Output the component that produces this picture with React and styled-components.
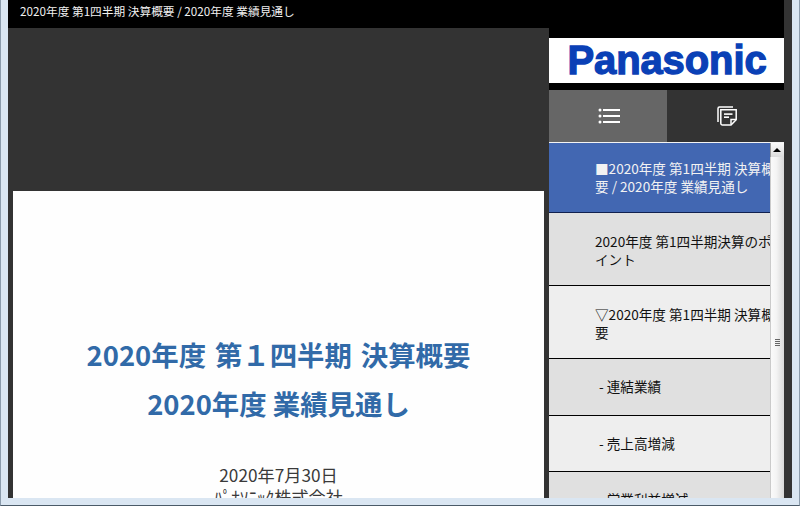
import React from "react";
import styled, { createGlobalStyle } from "styled-components";

const Global = createGlobalStyle`
  html, body { margin: 0; padding: 0; background: #dae6f2; }
  #root { width: 800px; height: 506px; overflow: hidden; }
`;

const Frame = styled.div`
  box-sizing: border-box;
  width: 800px;
  height: 506px;
  padding: 0 7px 7px;
  background: #dae6f2;
  display: flex;
  border-left: 1px solid #8b9bab;
  border-right: 1px solid #8b9bab;
  border-bottom: 1px solid #4a5a68;
  font-family: "Noto Sans CJK JP", "Liberation Sans", sans-serif;
`;

const LeftPane = styled.section`
  width: 541px;
  display: flex;
  flex-direction: column;
  background: #333;
`;

const TitleBar = styled.header`
  height: 28px;
  flex: none;
  background: #000;
  color: #f0f0f0;
  font-size: 11.7px;
  line-height: 21px;
  padding-left: 12px;
  white-space: nowrap;
`;

const Stage = styled.div`
  flex: 1;
  min-height: 0;
  padding: 163px 5px 0 5px;
  display: flex;
`;

const Slide = styled.article`
  flex: 1;
  background: #fefefe;
  overflow: hidden;
  text-align: center;
  padding-top: 139px;
`;

const SlideTitle = styled.h1`
  margin: 0;
  font-size: 27.4px;
  line-height: 49px;
  font-weight: 700;
  color: #316aa8;
  white-space: nowrap;
  word-spacing: ${(p) => p.$spread || 0}px;
`;

const SlideMeta = styled.p`
  margin: 0;
  font-size: 17.2px;
  line-height: 22px;
  color: #3a3a3a;
  white-space: nowrap;
  &:first-of-type { margin-top: 36px; }
`;

const RightPane = styled.aside`
  width: 243px;
  display: flex;
  flex-direction: column;
  background: #333;
`;

const LogoHeader = styled.div`
  width: 235px;
  flex: none;
  background: #000;
  padding: 38px 0 7px;
`;

const LogoBox = styled.div`
  height: 45px;
  background: #fff;
  display: flex;
  align-items: center;
  justify-content: center;
  overflow: hidden;
`;

const Logo = styled.span`
  font-family: "Liberation Sans", Arial, sans-serif;
  font-weight: 700;
  font-size: 40px;
  line-height: 45px;
  letter-spacing: -0.1px;
  color: #0a40b6;
  -webkit-text-stroke: 1.3px #0a40b6;
  margin-left: 1px;
`;

const Tabs = styled.nav`
  display: flex;
  height: 52px;
  flex: none;
`;

const Tab = styled.div`
  width: ${(p) => p.$w}px;
  background: ${(p) => (p.$active ? "#666" : "#333")};
  display: flex;
  align-items: center;
  padding-left: ${(p) => p.$pad}px;
  box-sizing: border-box;
  color: #fff;
`;

const ListArea = styled.div`
  flex: 1;
  min-height: 0;
  width: 235px;
  display: flex;
  border-top: 1px solid #f4f4f4;
`;

const Rows = styled.ul`
  list-style: none;
  margin: 0;
  padding: 0;
  width: 221px;
  overflow: hidden;
`;

const Row = styled.li`
  box-sizing: border-box;
  height: ${(p) => p.$h}px;
  padding: ${(p) => p.$top}px 0 0 ${(p) => (p.$sub ? 50 : 46)}px;
  border-bottom: 1px solid ${(p) => (p.$selected ? "#10204f" : "#000")};
  background: ${(p) => (p.$selected ? "#4267b2" : p.$odd ? "#e0e0e0" : "#eeeeee")};
  color: ${(p) => (p.$selected ? "#f2f2f2" : "#111")};
  font-size: 13.6px;
  line-height: 18px;
  white-space: nowrap;
`;

const Scrollbar = styled.div`
  width: 14px;
  display: flex;
  flex-direction: column;
  background: #fff;
  box-shadow: inset 1px 0 0 #9a9a9a;
`;

const ScrollButton = styled.div`
  height: 14px;
  flex: none;
  display: flex;
  align-items: center;
  justify-content: center;
  background: linear-gradient(#fafafa, #dcdcdc);
  box-shadow: inset 1px 0 0 #9a9a9a;
  &::before {
    content: "";
    border-left: 4px solid transparent;
    border-right: 4px solid transparent;
    border-bottom: 4px solid #000;
  }
`;

const ScrollThumb = styled.div`
  flex: 1;
  display: flex;
  flex-direction: column;
  align-items: center;
  gap: 1px;
  padding-top: 182px;
  background: linear-gradient(90deg, #a5a5a5 0, #fafafa 8%, #f4f4f4 45%, #d8d8d8 100%);
`;

const Grip = styled.i`
  display: block;
  width: 5px;
  height: 1px;
  background: #666;
`;

const ListIcon = () => (
  <svg width="22" height="18" viewBox="0 0 22 18" fill="#fff" aria-hidden="true">
    <circle cx="2" cy="3" r="1.5" />
    <circle cx="2" cy="9" r="1.5" />
    <circle cx="2" cy="15" r="1.5" />
    <rect x="5" y="2" width="17" height="2" />
    <rect x="5" y="8" width="17" height="2" />
    <rect x="5" y="14" width="17" height="2" />
  </svg>
);

const NoteIcon = () => (
  <svg width="20" height="20" viewBox="0 0 20 20" fill="none" stroke="#fff" strokeWidth="1.5" aria-hidden="true">
    <path d="M1 16V2.5C1 1.5 1.7 1 2.5 1H16" />
    <path d="M3.8 3.8h15.4v10L14 19H5.5c-1 0-1.7-.7-1.7-1.7z" />
    <path d="M14 18.5V13.5h5" />
    <rect x="7" y="7.3" width="8.5" height="1.6" fill="#fff" stroke="none" />
    <rect x="7" y="10.4" width="5" height="1.6" fill="#fff" stroke="none" />
  </svg>
);

const items = [
  { lines: ["■2020年度 第1四半期 決算概", "要 / 2020年度 業績見通し"], selected: true, h: 70, top: 16 },
  { lines: ["2020年度 第1四半期決算のポ", "イント"], odd: true, h: 73, top: 19 },
  { lines: ["▽2020年度 第1四半期 決算概", "要"], h: 73, top: 19 },
  { lines: ["- 連結業績"], odd: true, sub: true, h: 57, top: 18 },
  { lines: ["- 売上高増減"], sub: true, h: 56, top: 18 },
  { lines: ["- 営業利益増減"], odd: true, sub: true, h: 57, top: 18 },
];

export default function App() {
  return (
    <>
      <Global />
      <Frame>
        <LeftPane>
          <TitleBar>2020年度 第1四半期 決算概要 / 2020年度 業績見通し</TitleBar>
          <Stage>
            <Slide>
              <SlideTitle $spread={2.7}>2020年度 第１四半期 決算概要</SlideTitle>
              <SlideTitle>2020年度 業績見通し</SlideTitle>
              <SlideMeta>2020年7月30日</SlideMeta>
              <SlideMeta>ﾊﾟﾅｿﾆｯｸ株式会社</SlideMeta>
            </Slide>
          </Stage>
        </LeftPane>
        <RightPane>
          <LogoHeader>
            <LogoBox>
              <Logo>Panasonic</Logo>
            </LogoBox>
          </LogoHeader>
          <Tabs>
            <Tab $active $w={118} $pad={49}>
              <ListIcon />
            </Tab>
            <Tab $w={125} $pad={50}>
              <NoteIcon />
            </Tab>
          </Tabs>
          <ListArea>
            <Rows>
              {items.map((it, i) => (
                <Row key={i} $selected={it.selected} $odd={it.odd} $sub={it.sub} $h={it.h} $top={it.top}>
                  {it.lines.map((l, j) => (
                    <React.Fragment key={j}>
                      {j > 0 && <br />}
                      {l}
                    </React.Fragment>
                  ))}
                </Row>
              ))}
            </Rows>
            <Scrollbar>
              <ScrollButton />
              <ScrollThumb>
                <Grip />
                <Grip />
                <Grip />
                <Grip />
              </ScrollThumb>
            </Scrollbar>
          </ListArea>
        </RightPane>
      </Frame>
    </>
  );
}
